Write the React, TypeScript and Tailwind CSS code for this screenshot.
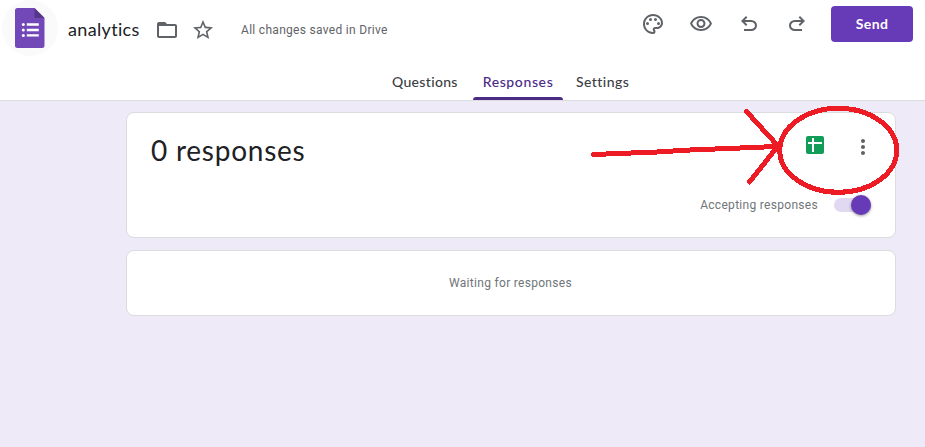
import { MdFolderOpen, MdMoreVert, MdOutlinePalette, MdOutlineVisibility, MdStarBorder } from 'react-icons/md';

const display = "font-['Lato','Noto_Sans',sans-serif]";
const body = "font-['Roboto',sans-serif]";

function FormsLogo() {
  return (
    <div className="flex size-14 shrink-0 items-center justify-center rounded-full bg-[#fafafa]">
      <svg width="30" height="40" viewBox="0 0 30 40">
        <path d="M2.500 0H19.500L29.500 10V37.500A2.500 2.500 0 0 1 27 40H2.500A2.500 2.500 0 0 1 0 37.500V2.500A2.500 2.500 0 0 1 2.500 0Z" fill="#7248b9" />
        <path d="M19.500 0L29.500 10H19.500Z" fill="#563688" />
        <g fill="#fff">
          <circle cx="8.300" cy="16.500" r="1.500" />
          <circle cx="8.300" cy="22" r="1.500" />
          <circle cx="8.300" cy="27.400" r="1.500" />
          <path d="M11.800 15.300h12v2.400h-12zM11.800 20.800h12v2.400h-12zM11.800 26.200h12v2.400h-12z" />
        </g>
      </svg>
    </div>
  );
}

function UndoIcon({ flip = false }: { flip?: boolean }) {
  return (
    <svg width="24" height="24" viewBox="0 -960 960 960" fill="currentColor" className={flip ? '-scale-x-100' : ''}>
      <path d="M280-200v-80h284q63 0 109.500-40T720-420q0-60-46.500-100T564-560H312l104 104-56 56-200-200 200-200 56 56-104 104h252q97 0 166.500 63T800-420q0 94-69.500 157T564-200H280Z" />
    </svg>
  );
}

function SheetsIcon() {
  return (
    <svg width="18" height="18" viewBox="0 0 18 18">
      <rect width="18" height="18" rx="2" fill="#0f9d58" />
      <path d="M2 6h14v2H8v8H6V8H2zM6 2h2v4H6z" fill="#fff" />
    </svg>
  );
}

function Header() {
  return (
    <header className="flex h-[101px] flex-col justify-between border-b border-[#dadce0] bg-white">
      <div className="flex h-14 items-start justify-between pl-0.5 pr-3">
        <div className="flex h-14 items-center">
          <FormsLogo />
          <div className="flex items-center pt-1">
            <h1 className={`-mt-0.5 ml-[10px] w-[87px] whitespace-nowrap text-[18px] leading-6 tracking-[0.34px] text-[#202124] ${display}`}>analytics</h1>
            <MdFolderOpen size={24} color="#5f6368" />
            <MdStarBorder size={24} color="#5f6368" className="ml-3" />
            <span className={`ml-[26px] text-[12px] leading-4 tracking-[0.3px] text-[#5f6368] ${body}`}>All changes saved in Drive</span>
          </div>
        </div>
        <div className="flex items-center pt-1.5 text-[#5f6368]">
          <div className="mr-[22px] flex gap-6">
            <MdOutlinePalette size={24} />
            <MdOutlineVisibility size={24} />
            <UndoIcon />
            <UndoIcon flip />
          </div>
          <button className={`h-9 w-[82px] rounded bg-[#673ab7] pb-0.5 text-[14px] font-bold tracking-[0.4px] text-white ${display}`}>Send</button>
        </div>
      </div>
      <nav className={`ml-[382px] flex h-9 text-[14px] font-medium text-[#3c4043] ${display}`}>
        <span className="w-[91px] pl-[10px] pt-2 leading-5 tracking-[0.33px]">Questions</span>
        <span className="flex w-[90px] flex-col items-center justify-between pt-2 leading-5 tracking-[0.62px] text-[#4c2b87]">
          Responses
          <span className="h-[3px] w-full rounded-t-[3px] bg-[#4c2b87]" />
        </span>
        <span className="pl-[13px] pt-2 leading-5 tracking-[0.45px]">Settings</span>
      </nav>
    </header>
  );
}

function Annotation() {
  return (
    <svg className="pointer-events-none absolute left-0 top-0" width="925" height="447" fill="none" stroke="#ed1c24" strokeWidth="5" strokeLinecap="round" strokeLinejoin="round" shapeRendering="crispEdges">
      <path d="M593.500 154.500L657 152L690 150L777 146.500" />
      <path d="M746.500 111.500L778 146L749.500 182" />
      <ellipse cx="838.300" cy="150.300" rx="58.500" ry="42" />
    </svg>
  );
}

export default function App() {
  return (
    <div className="relative h-[447px] w-[925px] overflow-hidden bg-[#eeeaf8]">
      <Header />
      <main className="ml-[126px] mt-[11px] flex w-[770px] flex-col gap-3">
        <section className="flex h-[126px] flex-col justify-between rounded-lg border border-[#dadce0] bg-white pb-[22px] pl-6 pr-[20px] pt-[19px]">
          <div className="flex items-start justify-between">
            <h2 className={`text-[28px] leading-9 tracking-[0.75px] text-[#202124] ${display}`}>0 responses</h2>
            <div className="flex items-start pt-1">
              <SheetsIcon />
              <MdMoreVert size={24} color="#5f6368" className="-mt-px ml-[27px]" />
            </div>
          </div>
          <div className="flex h-5 items-center justify-end pr-1">
            <span className={`text-[12px] leading-4 tracking-[0.3px] text-[#70757a] ${body}`}>Accepting responses</span>
            <div className="ml-4 flex h-[14px] w-[37px] items-center justify-end rounded-full bg-[#e1d8f1]">
              <span className="size-5 shrink-0 rounded-full bg-[#673ab7] shadow-[0_1px_3px_rgba(0,0,0,0.4)]" />
            </div>
          </div>
        </section>
        <section className="flex h-[66px] items-center justify-center rounded-lg border border-[#dadce0] bg-white pr-px">
          <span className={`text-[12px] leading-4 tracking-[0.3px] text-[#70757a] ${body}`}>Waiting for responses</span>
        </section>
      </main>
      <Annotation />
    </div>
  );
}
